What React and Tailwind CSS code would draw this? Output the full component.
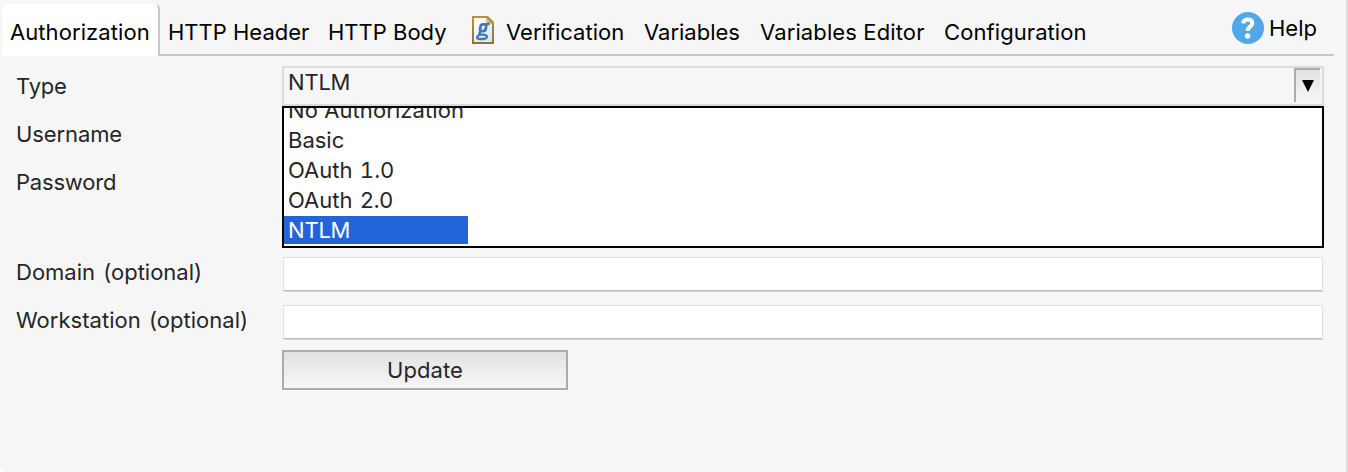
import React from 'react';

function ScriptIcon() {
  return (
    <svg className="block h-7 w-[22px] shrink-0" viewBox="0 0 22 28">
      <defs>
        <linearGradient id="edge" x1="0" y1="0" x2="0" y2="1">
          <stop offset="0" stopColor="#b8923f" />
          <stop offset="1" stopColor="#8a7338" />
        </linearGradient>
        <linearGradient id="paper" x1="0" y1="0" x2="1" y2="1">
          <stop offset="0" stopColor="#ffffff" />
          <stop offset="1" stopColor="#d3e6f8" />
        </linearGradient>
      </defs>
      <path d="M0 0H16L22 6V28H0Z" fill="url(#edge)" />
      <path d="M2 2H14V8H20V26H2Z" fill="url(#paper)" />
      <path d="M14 1.5L20.5 8H14Z" fill="#e3be78" />
      <g fill="none" stroke="#4479ae" strokeLinejoin="round">
        <path strokeWidth="2.8" d="M10.8 8.4H12.2Q14.4 8.4 14.1 10.5L13.7 12.9Q13.2 15.1 11 15.1H9.7Q7.7 15.1 8.1 12.9L8.6 10.5Q9 8.4 10.8 8.4Z" />
        <path strokeWidth="2.6" d="M13.4 8.8L17.6 7.6" />
        <path strokeWidth="2.4" d="M8.6 15.4Q6.2 17.8 8.5 18.4L12.5 18.9Q15.6 19.4 14.8 21.3Q14 23 11.5 23H7.3Q4.6 23 5.2 21Q5.8 19.3 8.4 18.6" />
      </g>
    </svg>
  );
}

function HelpIcon() {
  return (
    <svg className="block size-8 shrink-0" viewBox="0 0 32 32">
      <circle cx="16" cy="16" r="16" fill="#51a7e8" />
      <path d="M11 11.4C11.4 8.8 13.2 7.4 15.9 7.4C18.7 7.4 20.3 9 20.3 11.2C20.3 14.6 15.7 14.6 15.5 18.8" fill="none" stroke="#fff" strokeWidth="4" />
      <circle cx="15.6" cy="24" r="2.8" fill="#fff" />
    </svg>
  );
}

function Tab({ children, className = '' }) {
  return <div className={`shrink-0 whitespace-nowrap ${className}`}>{children}</div>;
}

function Row({ label, children, className = '', text = '' }) {
  return (
    <div className={`flex h-12 items-center ${className}`}>
      <div className={`w-[266px] shrink-0 whitespace-nowrap ${text}`}>{label}</div>
      {children}
    </div>
  );
}

function Field() {
  return (
    <div className="ml-px mt-1 h-[34px] w-[1040px] rounded-[1px] border border-[#e0e0e0] border-b-[#b9b9b9] bg-white shadow-[0_1px_0_#dadada]" />
  );
}

function Option({ children, className = '' }) {
  return <div className={`h-[30px] shrink-0 pl-1 leading-7 whitespace-nowrap ${className}`}>{children}</div>;
}

export default function App() {
  return (
    <div className="h-[472px] w-[1348px] overflow-hidden rounded-bl-lg border-r-2 border-[#dcdcdc] bg-[#f6f6f6] font-['Inter',sans-serif] text-[22px] leading-7 text-[#262626]">
      <div className="flex h-14 pl-0.5 pr-3 text-black">
        <div className="mt-1 h-[52px] w-[158px] shrink-0 rounded-t-[5px] border-r-2 border-[#c8c8c8] bg-white pl-2 pt-3.5">
          <Tab className="tracking-[0.08px]">Authorization</Tab>
        </div>
        <div className="flex min-w-0 grow border-b-2 border-[#c8c8c8] pl-2 pt-[18px]">
          <Tab className="w-[160px]">HTTP Header</Tab>
          <Tab className="w-[144px]">HTTP Body</Tab>
          <div className="-mt-0.5 mr-3"><ScriptIcon /></div>
          <Tab className="w-[138px]">Verification</Tab>
          <Tab className="w-[116px]">Variables</Tab>
          <Tab className="w-[184px] tracking-[0.12px]">Variables Editor</Tab>
          <Tab className="w-[288px] tracking-[0.08px]">Configuration</Tab>
          <div className="-mt-1.5 mr-[5px]"><HelpIcon /></div>
          <Tab className="-mt-1">Help</Tab>
        </div>
      </div>
      <div className="pl-4 pt-1.5">
        <Row label="Type" text="tracking-[-0.2px]">
          <div className="relative h-10 w-[1042px]">
            <div className="flex h-10 border-2 border-[#dcdcdc] pl-1">
              <div className="grow leading-7 tracking-[-0.2px]">NTLM</div>
              <div className="mr-0.5 flex h-[34px] w-[26px] items-center justify-center border-l-2 border-t-2 border-[#ababab] bg-linear-to-b from-[#e2e2e2] to-[#f6f6f6]">
                <svg className="h-3 w-3" viewBox="0 0 12 12"><path d="M0 0H12L6 12Z" fill="#000" /></svg>
              </div>
            </div>
            <div className="absolute left-0 top-10 flex h-[142px] w-[1042px] flex-col justify-end overflow-hidden border-2 border-black bg-white">
              <Option className="tracking-[0.08px]">No Authorization</Option>
              <Option>Basic</Option>
              <Option className="tabular-nums [word-spacing:1.5px]">OAuth 1.0</Option>
              <Option className="[word-spacing:1.5px]">OAuth 2.0</Option>
              <div className="mb-0.5 h-7 w-[184px] shrink-0 bg-[#2464da] pl-1 leading-7 tracking-[-0.2px] text-white">NTLM</div>
            </div>
          </div>
        </Row>
        <Row label="Username" text="tracking-[-0.1px]" />
        <Row label="Password" text="tracking-[-0.2px]" />
        <Row label="Domain (optional)" text="[word-spacing:2px]" className="mt-[42px]"><Field /></Row>
        <Row label="Workstation (optional)" text="tracking-[0.03px] [word-spacing:2px]"><Field /></Row>
        <div className="ml-[266px] mt-1.5 flex h-10 w-[286px] items-center justify-center border-2 border-[#ababab] bg-linear-to-b from-[#e2e2e2] to-[#f6f6f6]">
          <span className="tracking-[0.1px]">Update</span>
        </div>
      </div>
    </div>
  );
}
